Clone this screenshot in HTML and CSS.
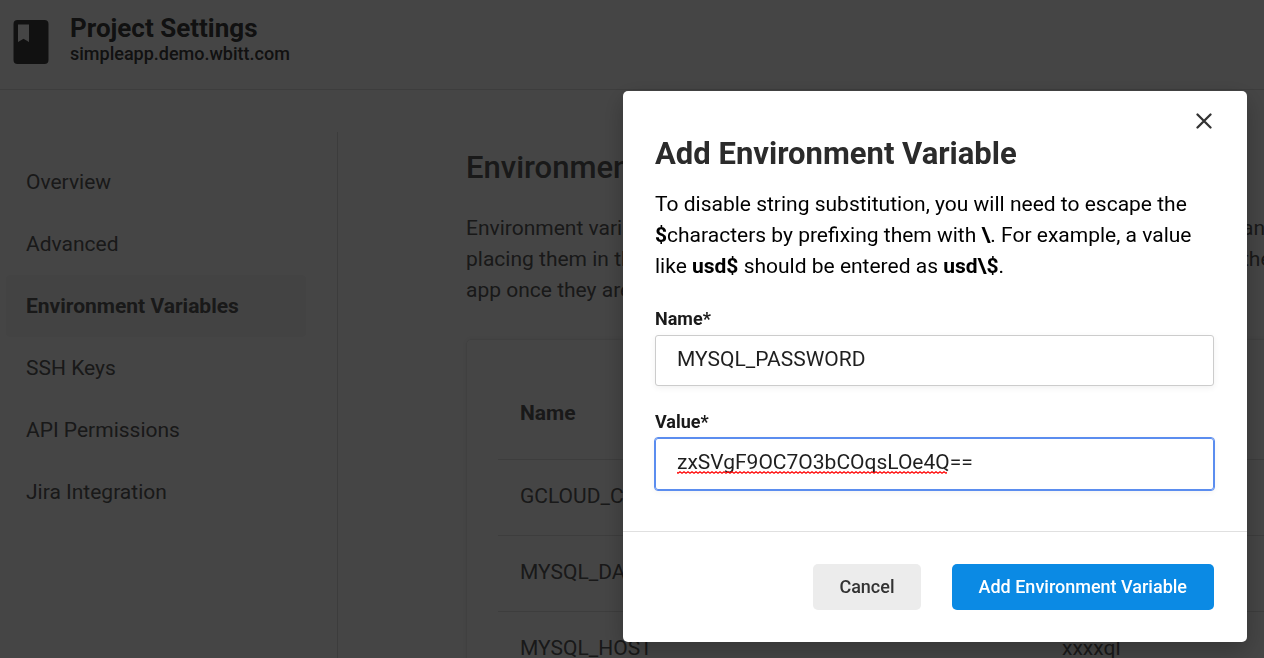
FILE: index.html
```html
<!DOCTYPE html>
<html lang="en">
<head>
<meta charset="utf-8">
<title>Project Settings</title>
<link rel="stylesheet" href="styles.css">
</head>
<body>
<div class="page">
  <header class="header">
    <svg class="logo" viewBox="0 0 36 44" aria-hidden="true">
      <path fill-rule="evenodd" d="M4.500 0H31.500A4 4 0 0 1 35.500 4V40A4 4 0 0 1 31.500 44H4.500A4 4 0 0 1 .5 40V4A4 4 0 0 1 4.500 0ZM5 4.500V22L10.500 18.800L16 22V4.500Z"/>
    </svg>
    <div>
      <h1 class="project">Project Settings</h1>
      <p class="domain">simpleapp.demo.wbitt.com</p>
    </div>
  </header>
  <div class="body">
    <nav class="sidebar">
      <a class="nav-item" href="#">Overview</a>
      <a class="nav-item" href="#">Advanced</a>
      <a class="nav-item active" href="#">Environment Variables</a>
      <a class="nav-item" href="#">SSH Keys</a>
      <a class="nav-item" href="#">API Permissions</a>
      <a class="nav-item" href="#">Jira Integration</a>
    </nav>
    <main class="content">
      <h2 class="heading">Environment Variables</h2>
      <div class="intro">
        <span>Environment variables</span><span>and</span>
        <span>placing them in the</span><span>the</span>
        <span>app once they are</span>
      </div>
      <section class="card">
        <table class="vars">
          <thead><tr><th>Name</th><th>Value</th></tr></thead>
          <tbody>
            <tr><td>GCLOUD_C</td><td></td></tr>
            <tr><td>MYSQL_DA</td><td></td></tr>
            <tr><td>MYSQL_HOST</td><td>xxxxql</td></tr>
          </tbody>
        </table>
      </section>
    </main>
  </div>
</div>
<div class="overlay">
  <form class="modal" role="dialog" aria-labelledby="dialog-title">
    <div class="modal-main">
      <button class="close" type="button" aria-label="Close">
        <svg viewBox="0 0 16 16" aria-hidden="true"><path d="M1.500 1.500L14.500 14.500M14.500 1.500L1.500 14.500"/></svg>
      </button>
      <h2 class="title" id="dialog-title">Add Environment Variable</h2>
      <p class="help">To disable string substitution, you will need to escape the <b>$</b>characters by prefixing them with <b>\</b>. For example, a value like <b>usd$</b> should be entered as <b>usd\$</b>.</p>
      <div class="field">
        <label for="name">Name*</label>
        <input id="name" type="text" value="MYSQL_PASSWORD">
      </div>
      <div class="field">
        <label for="value">Value*</label>
        <div class="spelled">
          <input class="focused" id="value" type="text" value="zxSVgF9OC7O3bCOqsLOe4Q==">
          <svg class="squiggle" aria-hidden="true">
            <defs><pattern id="wave" width="4" height="3" patternUnits="userSpaceOnUse"><path d="M-1 .8L1 2.200L3 .8L5 2.200"/></pattern></defs>
            <rect width="100%" height="3" fill="url(#wave)"/>
          </svg>
        </div>
      </div>
    </div>
    <footer class="actions">
      <button class="btn cancel" type="button">Cancel</button>
      <button class="btn add" type="submit">Add Environment Variable</button>
    </footer>
  </form>
</div>
</body>
</html>
```

FILE: styles.css
```css
* { box-sizing: border-box; }
body {
  margin: 0;
  font-family: Roboto, "Liberation Sans", sans-serif;
  font-size: 21px;
  color: #5c5c5c;
  background: #fff;
}
h1, h2, p { margin: 0; }
.page { height: 100vh; overflow: hidden; display: flex; flex-direction: column; }
.header {
  display: flex;
  flex: none;
  gap: 21px;
  height: 90px;
  padding: 13px;
  border-bottom: 1px solid #e0e0e0;
  color: #404040;
}
.logo { width: 36px; height: 44px; margin-top: 7px; fill: #404040; }
.project { font-size: 26px; line-height: 30px; font-weight: 700; }
.domain { font-size: 18px; line-height: 22px; font-weight: 500; }
.body { display: flex; flex: 1; padding-top: 42px; }
.sidebar {
  flex: none;
  width: 338px;
  padding: 19px 31px 0 6px;
  border-right: 1px solid #dcdcdc;
}
.nav-item {
  display: block;
  padding: 0 20px;
  line-height: 62px;
  color: inherit;
  text-decoration: none;
}
.active { background: #f7f7f7; font-weight: 700; border-radius: 4px; }
.content { flex: 1; min-width: 0; padding: 16px 0 0 128px; }
.heading { font-size: 31px; line-height: 40px; font-weight: 500; white-space: nowrap; }
.intro {
  display: grid;
  grid-template-columns: 776px 60px;
  margin-top: 25px;
  line-height: 31px;
}
.card {
  width: 860px;
  margin-top: 33px;
  padding: 31px;
  border: 1px solid #ececec;
  border-radius: 5px;
  box-shadow: 0 0 6px rgba(0, 0, 0, .08);
}
.vars { width: 100%; border-collapse: collapse; table-layout: fixed; }
.vars th, .vars td {
  height: 76px;
  padding: 0 22px 2px;
  text-align: left;
  border-bottom: 1px solid #e0e0e0;
}
.vars th { height: 88px; padding-bottom: 4px; font-weight: 700; }
.vars th:first-child { width: 542px; }
.overlay {
  position: fixed;
  inset: 0;
  display: flex;
  justify-content: flex-end;
  align-items: flex-start;
  padding: 91px 17px 16px;
  background: rgba(0, 0, 0, .73);
}
.modal {
  width: 624px;
  max-width: 100%;
  background: #fff;
  border-radius: 5px;
  box-shadow: 0 8px 24px rgba(0, 0, 0, .25);
  color: #000;
}
.modal-main { display: flex; flex-direction: column; padding: 18px 33px 41px 32px; }
.close {
  align-self: flex-end;
  display: flex;
  padding: 4px 2px;
  border: 0;
  background: none;
}
.close svg { width: 16px; height: 16px; fill: none; stroke: #333; stroke-width: 2.300; stroke-linecap: round; }
.title { margin-top: 1px; font-size: 31px; line-height: 40px; font-weight: 700; color: #2b2b2b; }
.help { margin-top: 15px; font-size: 21px; line-height: 31px; }
.field { margin-top: 25px; }
.field label { display: block; font-size: 18px; line-height: 22px; font-weight: 700; color: #1a1a1a; }
.help + .field { margin-top: 26px; }
.field input {
  display: block;
  width: 100%;
  height: 51px;
  margin-top: 5px;
  padding: 0 21px 4px;
  border: 1px solid #ccc;
  border-radius: 3px;
  box-shadow: 0 2px 6px rgba(0, 0, 0, .06);
  font: 21px Roboto, "Liberation Sans", sans-serif;
  color: #1f1f1f;
  outline: none;
}
.field .focused { height: 52px; padding-bottom: 5px; border-color: #5b8def; outline: 1px solid #5b8def; }
.spelled { position: relative; }
.squiggle { position: absolute; left: 22px; top: 33px; width: 270px; height: 3px; }
.squiggle path { fill: none; stroke: #f00; stroke-width: 1.200; }
.actions {
  display: flex;
  justify-content: flex-end;
  gap: 31px;
  padding: 32px 33px 32px 32px;
  border-top: 1px solid #e0e0e0;
}
.btn {
  height: 46px;
  padding: 0 27px 2px;
  border: 0;
  border-radius: 5px;
  font: 500 18px Roboto, "Liberation Sans", sans-serif;
}
.cancel { padding: 0 26px 2px; background: #ececec; color: #333; }
.add { background: #0b8ae4; color: #fff; }
```
